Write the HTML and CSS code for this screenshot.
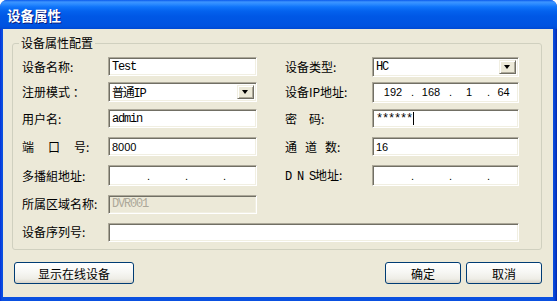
FILE: index.html
```html
<!DOCTYPE html>
<html lang="zh">

<head>
    <meta charset="UTF-8">
    <title>设备属性</title>
    <link rel="stylesheet" href="styles.css">
</head>

<body>
    <div class="window">
        <div class="titlebar"><span class="title">设备属性</span></div>

        <div class="client">
            <fieldset class="group">
                <legend>设备属性配置</legend>

                <div class="form">
                    <!-- row 1 -->
                    <label>设备名称:</label>
                    <div class="field mono">Test</div>
                    <span></span>
                    <label>设备类型:</label>
                    <div class="field combo mono">HC<span class="drop"></span></div>

                    <!-- row 2 -->
                    <label>注册模式 ：</label>
                    <div class="field combo mono">普通IP<span class="drop"></span></div>
                    <span></span>
                    <label>设备IP地址:</label>
                    <div class="field ip">
                        <span class="seg">192</span><span class="dot">.</span>
                        <span class="seg">168</span><span class="dot">.</span>
                        <span class="seg">1</span><span class="dot">.</span>
                        <span class="seg last">64</span>
                    </div>

                    <!-- row 3 -->
                    <label>用户名:</label>
                    <div class="field mono">admin</div>
                    <span></span>
                    <label><span class="ls12">密</span>码:</label>
                    <div class="field mono">******<span class="caret"></span></div>

                    <!-- row 4 -->
                    <label><span class="ls14">端口</span>号:</label>
                    <div class="field sans">8000</div>
                    <span></span>
                    <label><span class="ls8">通道</span>数:</label>
                    <div class="field sans">16</div>

                    <!-- row 5 -->
                    <label>多播組地址:</label>
                    <div class="field ip">
                        <span class="seg"></span><span class="dot">.</span>
                        <span class="seg"></span><span class="dot">.</span>
                        <span class="seg"></span><span class="dot">.</span>
                        <span class="seg last"></span>
                    </div>
                    <span></span>
                    <label><span class="mono-label">D N S</span>地址:</label>
                    <div class="field ip">
                        <span class="seg"></span><span class="dot">.</span>
                        <span class="seg"></span><span class="dot">.</span>
                        <span class="seg"></span><span class="dot">.</span>
                        <span class="seg last"></span>
                    </div>

                    <!-- row 6 -->
                    <label>所属区域名称:</label>
                    <div class="field mono disabled">DVR001</div>
                    <span></span>
                    <span></span>
                    <span></span>

                    <!-- row 7 -->
                    <label>设备序列号:</label>
                    <div class="field wide"></div>
                </div>
            </fieldset>

            <div class="actions">
                <button type="button" class="btn btn-online">显示在线设备</button>
                <div class="actions-right">
                    <button type="button" class="btn">确定</button>
                    <button type="button" class="btn">取消</button>
                </div>
            </div>
        </div>
    </div>
</body>

</html>
```

FILE: styles.css
```css
* {
    box-sizing: border-box;
}

body {
    margin: 0;
    background: #ffffff;
    font-family: "Noto Sans CJK SC", sans-serif;
    font-size: 12px;
    color: #000;
}

/* XP window frame */
.window {
    width: 557px;
    height: 301px;
    display: flex;
    flex-direction: column;
    background: linear-gradient(to right, #0831D9, #0A50E0 2px, #0A50E0 553px, #0840D0 555px, #0028B0);
    border-radius: 7px 7px 0 0;
    overflow: hidden;
}

.titlebar {
    height: 29px;
    flex: none;
    display: flex;
    align-items: center;
    padding-left: 7px;
    background: linear-gradient(#0A5AEC 0, #3D95FF 2px, #2C8BFF 4px, #0F74FA 7px, #0462EE 11px, #0058E6 16px, #0055E3 22px, #0053E0 26px, #0049D4 29px);
}

.title {
    color: #ffffff;
    font-weight: bold;
    font-size: 13.5px;
    line-height: 16px;
    text-shadow: 1px 1px 0 #0A1E80;
}

.client {
    flex: 1;
    margin: 0 4px 4px 3px;
    background: #ECE9D8;
    padding: 7px 11px 0 9px;
}

/* group box */
.group {
    margin: 0;
    padding: 0 0 3px 0;
    min-width: 0;
    border: 1px solid #D0D0BF;
    border-radius: 3px;
}

.group legend {
    margin-left: 6px;
    padding: 0 2px;
    line-height: 14px;
    font-size: 12px;
}

.form {
    display: grid;
    grid-template-columns: 86px 149px 28px 87px 147px;
    grid-template-rows: 25px 26px 27px 29px 29px 28px 28px;
    align-items: center;
    margin: 4px 0 0 9px;
}

.form label {
    white-space: nowrap;
    line-height: 14px;
}

.ls12 {
    letter-spacing: 12px;
}

.ls14 {
    letter-spacing: 14px;
}

.ls8 {
    letter-spacing: 8px;
}

.mono-label {
    font-family: "Liberation Mono", monospace;
    font-size: 12px;
    letter-spacing: -1.2px;
}

/* sunken edit boxes */
.field {
    height: 19px;
    display: flex;
    align-items: center;
    padding: 0 2px 0 3px;
    background: #ffffff;
    border: 1px solid;
    border-color: #ACA899 #ffffff #ffffff #ACA899;
    box-shadow: inset 1px 1px 0 #716F64, inset -1px -1px 0 #F1EFE2;
    white-space: nowrap;
    overflow: hidden;
}

.mono {
    font-family: "Liberation Mono", "Noto Sans CJK SC", monospace;
    font-size: 12px;
    letter-spacing: -1.2px;
}

.sans {
    font-family: "Liberation Sans", sans-serif;
    font-size: 11px;
}

.disabled {
    background: #ECE9D8;
    color: #ACA899;
}

.wide {
    grid-column: 2 / 6;
}

.combo {
    height: 20px;
    position: relative;
}

.drop {
    position: absolute;
    right: 2px;
    top: 2px;
    width: 17px;
    height: 14px;
    background: #ECE9D8;
    border: 1px solid;
    border-color: #F1EFE2 #716F64 #716F64 #F1EFE2;
    box-shadow: inset 1px 1px 0 #ffffff, inset -1px -1px 0 #ACA899;
}

.drop::after {
    content: "";
    position: absolute;
    left: 4px;
    top: 4px;
    border-left: 3.5px solid transparent;
    border-right: 3.5px solid transparent;
    border-top: 4px solid #000;
}

.caret {
    display: inline-block;
    width: 1px;
    height: 13px;
    background: #000;
    margin-left: 1px;
}

/* IP address control */
.ip {
    height: 21px;
    padding: 0 0 0 2px;
    font-family: "Liberation Sans", sans-serif;
    font-size: 11px;
}

.seg {
    flex: none;
    width: 36px;
    text-align: center;
}

.seg.last {
    flex: 1;
    width: auto;
}

.dot {
    flex: none;
    width: 2px;
    text-align: center;
}

/* bottom buttons */
.actions {
    display: flex;
    justify-content: space-between;
    margin-top: 12px;
    padding-left: 2px;
}

.actions-right {
    display: flex;
    gap: 5px;
}

.btn {
    height: 22px;
    width: 76px;
    padding: 0;
    border: 1px solid #003C74;
    border-radius: 3px;
    background: linear-gradient(#ffffff, #F7F7F4 45%, #EEEDE6 80%, #D8D3C8);
    font-family: "Noto Sans CJK SC", sans-serif;
    font-size: 12px;
    color: #000;
}

.btn-online {
    width: 120px;
}
```
